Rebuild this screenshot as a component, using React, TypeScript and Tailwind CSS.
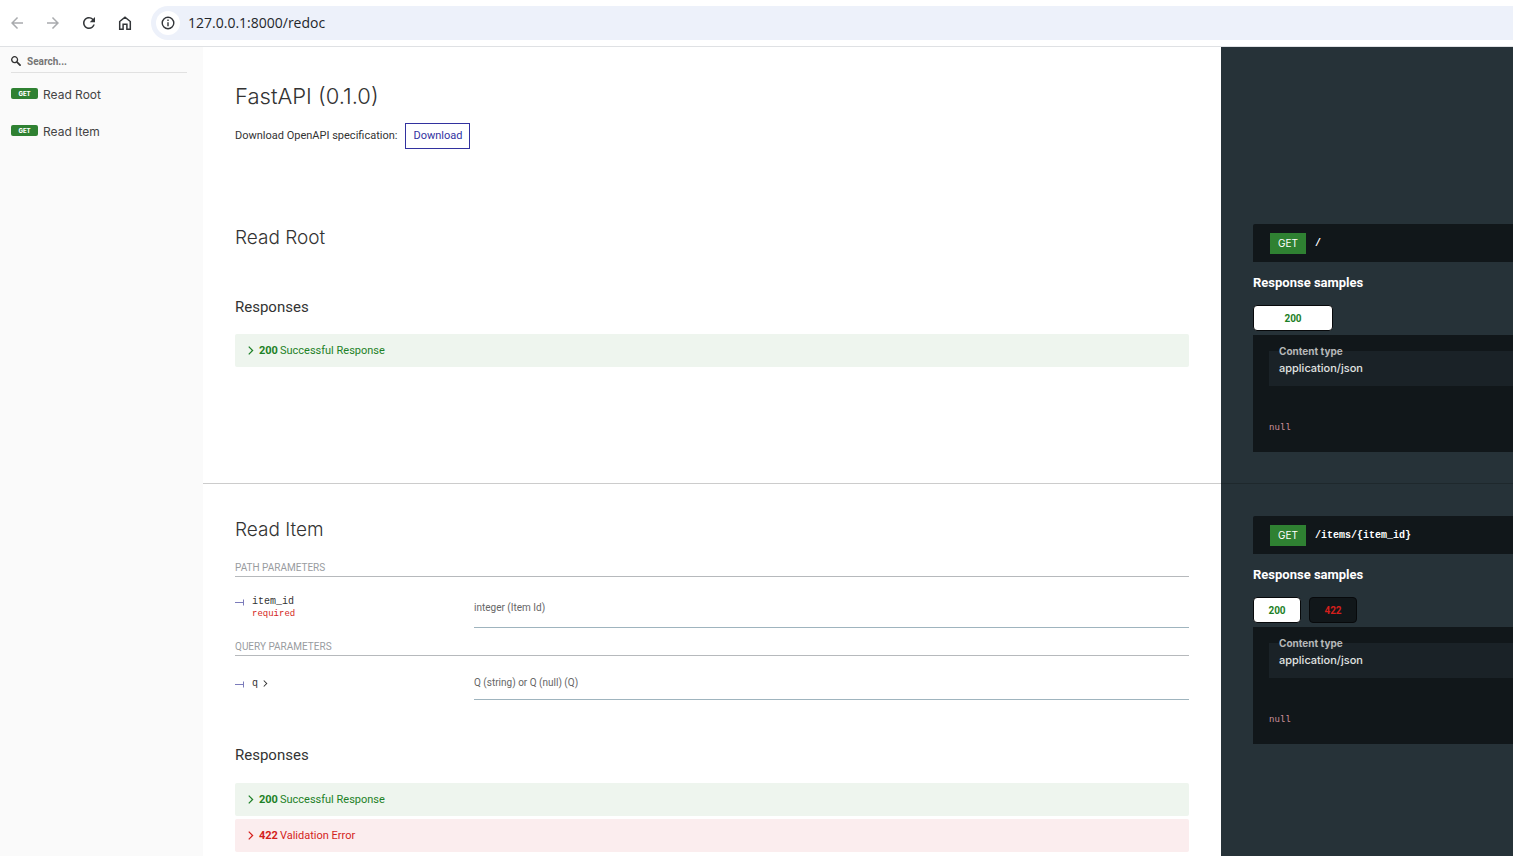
import type { ReactNode } from "react"
import { MdArrowBack, MdArrowForward, MdRefresh } from "react-icons/md"

const navItems = [
  { label: "Read Root", href: "#read-root" },
  { label: "Read Item", href: "#read-item" },
]

function HomeIcon() {
  return (
    <svg viewBox="0 0 16 16" className="h-4 w-4" fill="none" stroke="currentColor" strokeWidth="1.5">
      <path d="M2.700 6.500 8 2.200l5.300 4.300v7.800H9.900V9.300H6.100v5H2.700z" />
    </svg>
  )
}

function InfoIcon() {
  return (
    <svg viewBox="0 0 14 14" className="h-3.5 w-3.5">
      <circle cx="7" cy="7" r="5.8" fill="none" stroke="currentColor" strokeWidth="1.4" />
      <path d="M6.3 6.2h1.4v4H6.3zM6.3 3.6h1.4V5H6.3z" fill="currentColor" />
    </svg>
  )
}

function SearchIcon() {
  return (
    <svg viewBox="0 0 1000 1000" className="h-[10px] w-[10px] shrink-0" fill="#333333">
      <path d="M968.2 849.4 667.3 549c83.9-136.5 66.7-317.4-51.7-435.6-140.9-140.9-369.3-140.9-510.1 0-141 140.8-141 369 0 509.700 118.900 118.700 299.200 135.300 436.100 51.300l301.300 301c31.400 31.400 71.600 42.400 93.400 20.800l51.600-51.300c21.800-21.700 11.700-64.100-19.700-95.500zM524.500 522c-88.900 88.700-233 88.700-321.800 0-88.900-88.700-88.900-232.600 0-321.300 88.900-88.700 233-88.700 321.800 0 88.900 88.700 88.900 232.600 0 321.300z" />
    </svg>
  )
}

function Chevron({ className }: { className: string }) {
  return (
    <svg viewBox="8 5 9 14" className={className} fill="currentColor">
      <polygon points="8.3 6.7 13.6 12 8.3 17.3 9.7 18.700 16.4 12 9.7 5.3" />
    </svg>
  )
}

function BrowserBar() {
  return (
    <header className="flex h-[47px] items-center border-b border-[#dfe1e4] bg-white pl-2 text-[#333639]">
      <div className="flex w-[143px] shrink-0 items-center">
        <button aria-label="Back" className="flex w-9 shrink-0 text-[#a9abae]">
          <MdArrowBack className="h-[18px] w-[18px]" />
        </button>
        <button aria-label="Forward" className="flex w-9 shrink-0 text-[#a9abae]">
          <MdArrowForward className="h-[18px] w-[18px]" />
        </button>
        <button aria-label="Reload" className="flex w-9 shrink-0">
          <MdRefresh className="h-[18px] w-[18px]" />
        </button>
        <button aria-label="Home" className="flex pl-px">
          <HomeIcon />
        </button>
      </div>
      <div className="flex h-[34px] flex-1 items-center gap-2 rounded-l-full bg-[#edf1fa] pl-[5px]">
        <button aria-label="View site information" className="flex h-6 w-6 items-center justify-center rounded-full bg-white">
          <InfoIcon />
        </button>
        <input
          aria-label="Address"
          defaultValue="127.0.0.1:8000/redoc"
          className="flex-1 bg-transparent pb-px font-['Open_Sans',sans-serif] text-[14px] text-[#24272b] outline-none"
        />
      </div>
    </header>
  )
}

function Sidebar() {
  return (
    <aside className="w-[203px] shrink-0 bg-[#fafafa] pt-[6px]">
      <label className="ml-[11px] mr-4 flex h-5 items-center gap-[6px] border-b border-[#e1e1e1] pb-[3px]">
        <SearchIcon />
        <input
          type="text"
          aria-label="Search"
          placeholder="Search..."
          className="w-full bg-transparent text-[10px] font-bold outline-none placeholder:text-[#757575]"
        />
      </label>
      <nav className="mt-[3px]">
        {navItems.map((item) => (
          <a key={item.href} href={item.href} className="flex h-[37px] items-center gap-[5px] pl-[11px]">
            <span className="mb-[2px] flex h-[11px] w-[27px] items-center justify-center rounded-xs bg-[#2f8132] font-[Inter,sans-serif] text-[6px] font-extrabold text-white">
              GET
            </span>
            <span className="font-[Inter,sans-serif] text-[12px] text-[#444444]">{item.label}</span>
          </a>
        ))}
      </nav>
    </aside>
  )
}

type SectionProps = { id?: string; children: ReactNode; samples?: ReactNode; className?: string }

function Section({ id, children, samples, className = "" }: SectionProps) {
  return (
    <section id={id} className={`flex ${className}`}>
      <div className="min-w-0 flex-1 px-8">{children}</div>
      <div className="w-[292px] shrink-0 bg-[#263238] pl-8">{samples}</div>
    </section>
  )
}

function SectionTitle({ children }: { children: ReactNode }) {
  return <h2 className="pt-8 font-[Inter,sans-serif] text-[19px] leading-7 font-light text-[#333333]">{children}</h2>
}

function Response({ code, text, error }: { code: string; text: string; error?: boolean }) {
  const colors = error ? "bg-[#fbedee] text-[#d41f1c]" : "bg-[#eef5ee] text-[#1d8127]"
  return (
    <button className={`flex h-[33px] w-full items-center rounded-xs pl-[13px] text-[11px] leading-[17px] ${colors}`}>
      <Chevron className="mr-[5px] h-[9px] w-[6px]" />
      <strong className="mr-[2px]">{code}</strong>
      {text}
    </button>
  )
}

type Param = { name: string; type: string; required?: boolean; expandable?: boolean }

function ParamTable({ title, param }: { title: string; param: Param }) {
  return (
    <table className="w-full table-fixed">
      <caption className="border-b border-[#b6b9bc] pt-[2px] text-left text-[10px] leading-4 text-[#999c9f] uppercase">
        {title}
      </caption>
      <tbody>
        <tr>
          <th scope="row" className="w-[239px] pt-3 text-left align-middle font-normal">
            <div className="flex items-start">
              <svg viewBox="0 0 10 12" className="mr-[7px] h-3 w-[10px]" stroke="#7c7cbb" fill="none">
                <path d="M0 6.500h9M8.500 3.500v6" />
              </svg>
              <div className="font-['Liberation_Mono',monospace] text-[10px] leading-3 text-[#333333]">
                <span className="flex items-center gap-[5px]">
                  {param.name}
                  {param.expandable && <Chevron className="h-[7px] w-[5px]" />}
                </span>
                {param.required && <span className="block text-[9px] text-[#d41f1c]">required</span>}
              </div>
            </div>
          </th>
          <td
            className={`border-b border-[#9fb4be] text-[10px] text-[#666666] ${
              param.required ? "h-[50px] pt-5 pb-2" : "h-[44px] pt-[10px]"
            }`}
          >
            {param.type}
          </td>
        </tr>
      </tbody>
    </table>
  )
}

function Samples({ path, codes }: { path: string; codes: string[] }) {
  return (
    <div className="pt-8 text-white">
      <button className="flex h-[38px] w-full items-center gap-[9px] rounded-tl-xs bg-[#11171a] pl-[17px]">
        <span className="flex h-[21px] w-9 items-center justify-center bg-[#2f8132] font-[Inter,sans-serif] text-[10px]">GET</span>
        <span className="font-['Liberation_Mono',monospace] text-[10px] font-bold">{path}</span>
      </button>
      <h3 className="mt-3 text-[13px] leading-[18px] font-bold">Response samples</h3>
      <div role="tablist" className="mt-[13px] flex gap-2">
        {codes.map((code, i) => (
          <button
            key={code}
            role="tab"
            aria-selected={i === 0}
            className={`h-[26px] rounded border border-[#07090b] text-[10px] font-bold ${
              codes.length === 1 ? "w-20" : "w-12"
            } ${i === 0 ? "bg-white text-[#1d8127]" : "bg-[#11171a] text-[#d41f1c]"}`}
          >
            {code}
          </button>
        ))}
      </div>
      <div role="tabpanel" className="mt-1 h-[117px] bg-[#11171a] pt-2 pl-4 font-[Inter,sans-serif]">
        <div className="bg-[linear-gradient(to_bottom,transparent_8px,#1a2227_8px)] pb-[9px] pl-[10px]">
          <div className="text-[10px] leading-4 font-bold text-[#b5b7b8]">Content type</div>
          <div className="text-[11px] leading-[18px] font-medium text-[#e0e2e2]">application/json</div>
        </div>
        <code className="mt-9 block font-['Liberation_Mono',monospace] text-[9px] leading-3 text-[#d0929d]">null</code>
      </div>
    </div>
  )
}

export default function App() {
  return (
    <div className="flex min-h-screen flex-col bg-white font-[Roboto,sans-serif] text-[#333333]">
      <BrowserBar />
      <div className="flex flex-1">
        <Sidebar />
        <main className="flex min-w-0 flex-1 flex-col">
          <Section className="h-[145px]">
            <h1 className="pt-[35px] font-[Inter,sans-serif] text-[22px] leading-7 font-light">FastAPI (0.1.0)</h1>
            <p className="mt-[13px] flex items-center gap-2 text-[11px]">
              Download OpenAPI specification:
              <a href="#openapi" className="flex h-[26px] items-center border border-[#32329f] px-[7px] text-[#32329f]">
                Download
              </a>
            </p>
          </Section>

          <Section
            id="read-root"
            className="relative h-[292px] after:absolute after:inset-x-0 after:bottom-0 after:border-b after:border-black/20"
            samples={<Samples path="/" codes={["200"]} />}
          >
            <SectionTitle>Read Root</SectionTitle>
            <h3 className="mt-[45px] mb-[17px] text-[15px] leading-5">Responses</h3>
            <Response code="200" text="Successful Response" />
          </Section>

          <Section id="read-item" className="flex-1" samples={<Samples path="/items/{item_id}" codes={["200", "422"]} />}>
            <SectionTitle>Read Item</SectionTitle>
            <div className="mt-[14px] flex flex-col gap-[9px]">
              <ParamTable title="Path parameters" param={{ name: "item_id", type: "integer (Item Id)", required: true }} />
              <ParamTable title="Query parameters" param={{ name: "q", type: "Q (string) or Q (null) (Q)", expandable: true }} />
            </div>
            <h3 className="mt-[45px] mb-[18px] text-[15px] leading-5">Responses</h3>
            <div className="flex flex-col gap-[3px] pb-1">
              <Response code="200" text="Successful Response" />
              <Response code="422" text="Validation Error" error />
            </div>
          </Section>
        </main>
      </div>
    </div>
  )
}
